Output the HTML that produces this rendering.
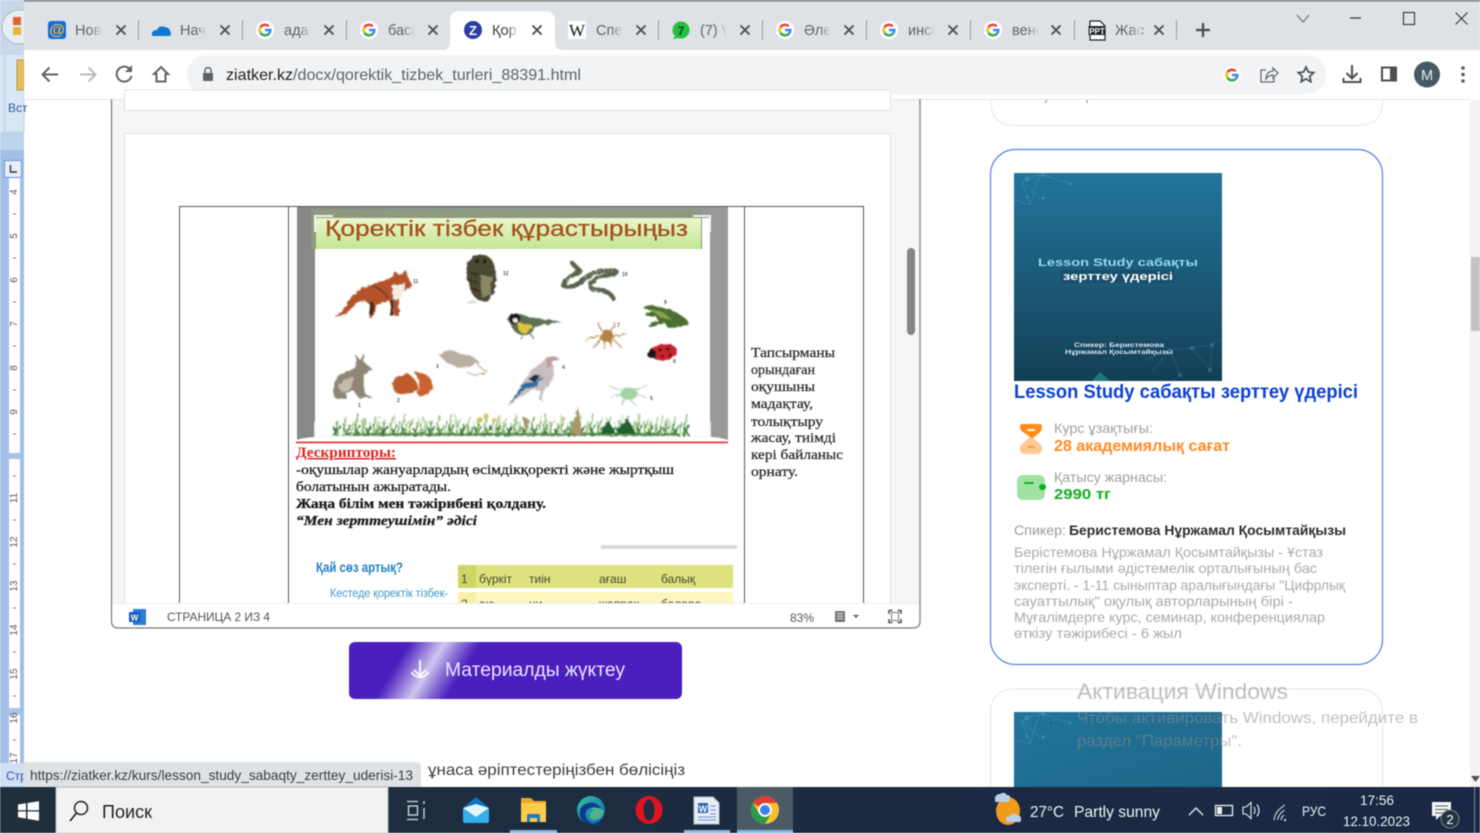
<!DOCTYPE html>
<html><head><meta charset="utf-8"><title>ziatker.kz</title>
<style>
html,body{margin:0;padding:0;width:1480px;height:833px;overflow:hidden;background:#fff}
svg{display:block;position:absolute;left:0;top:0;filter:blur(.4px)}
text{font-family:"Liberation Sans","Noto Sans CJK JP",sans-serif;white-space:pre}
.s{font-family:"Liberation Serif","Noto Serif CJK SC",serif}
.tab{font-size:14.5px;fill:#5f6368}
.x{stroke:#45484c;stroke-width:1.8;fill:none}
.sep{stroke:#9a9da1;stroke-width:1}
.g{fill:#a0a0a0;font-size:14px}
.d{fill:#aaa;font-size:14px}
.b{fill:#1c1c1c;font-size:14px;font-family:"Liberation Serif",serif;font-weight:bold;stroke:#222;stroke-width:.3}
.r{fill:#2a2a2a;font-size:14px;font-family:"Liberation Serif",serif;stroke:#2a2a2a;stroke-width:.25}
.w{fill:#eef0f2}
</style></head><body>
<svg width="1480" height="833" viewBox="0 0 1480 833" xmlns="http://www.w3.org/2000/svg">
<defs>
<linearGradient id="fade"><stop offset="0" stop-color="#dee1e6" stop-opacity="0"/><stop offset="1" stop-color="#dee1e6"/></linearGradient>
<linearGradient id="fadeW"><stop offset="0" stop-color="#fff" stop-opacity="0"/><stop offset="1" stop-color="#fff"/></linearGradient>
<linearGradient id="cover" x1="0" y1="0" x2="0" y2="1"><stop offset="0" stop-color="#23759c"/><stop offset=".55" stop-color="#1b5876"/><stop offset="1" stop-color="#143f56"/></linearGradient>
<linearGradient id="cover2" x1="0" y1="0" x2="1" y2="1"><stop offset="0" stop-color="#23759c"/><stop offset="1" stop-color="#1e6688"/></linearGradient>
<linearGradient id="shine" gradientUnits="userSpaceOnUse" x1="375" y1="699" x2="426.300" y2="730.500"><stop offset="0" stop-color="#4a1fbd"/><stop offset=".5" stop-color="#cfc6f0"/><stop offset=".74" stop-color="#8a6fd6"/><stop offset="1" stop-color="#4a1fbd"/></linearGradient>
<linearGradient id="tb"><stop offset="0" stop-color="#1f303c"/><stop offset="1" stop-color="#1a2845"/></linearGradient>
<linearGradient id="bar" x1="0" y1="0" x2="0" y2="1"><stop offset="0" stop-color="#eaf8cc"/><stop offset="1" stop-color="#c3e595"/></linearGradient>
<linearGradient id="edge" x1="0" y1="0" x2="1" y2="1"><stop offset="0" stop-color="#35c1a0"/><stop offset="1" stop-color="#0c63b8"/></linearGradient>
<linearGradient id="pan" x1="0" y1="0" x2="1" y2="0"><stop offset="0" stop-color="#888"/><stop offset="1" stop-color="#9a9a9a"/></linearGradient>
<filter id="bl" x="-5%" y="-5%" width="110%" height="110%"><feTurbulence type="fractalNoise" baseFrequency=".22" numOctaves="2" seed="4" result="n"/><feDisplacementMap in="SourceGraphic" in2="n" scale="3.500"/><feGaussianBlur stdDeviation=".55"/></filter>
<filter id="bl2" x="-10%" y="-300%" width="120%" height="700%"><feGaussianBlur stdDeviation="1"/></filter>
<pattern id="gr1" patternUnits="userSpaceOnUse" x="333" y="408" width="47" height="28">
<path d="M2 28L5 12M6 28L3 14M9 28L13 8M13 28L10 15M17 28L20 13M21 28L25 6M24 28L22 16M28 28L33 11M31 28L29 13M35 28L37 15M39 28L43 9M43 28L40 16M46 28L47 14" stroke="#6ea85a" stroke-width="1.100" fill="none"/>
<path d="M0 28L8 18M4 28L1 19M12 28L17 17M16 28L11 20M22 28L27 17M27 28L22 19M33 28L38 18M37 28L33 20M42 28L46 19" stroke="#2f6f35" stroke-width="1.500" fill="none"/>
</pattern>
<pattern id="gr2" patternUnits="userSpaceOnUse" x="351" y="408" width="61" height="28">
<path d="M4 28L7 8M8 28L14 13M15 28L12 10M24 28L28 7M30 28L26 14M38 28L42 11M46 28L43 6M52 28L57 12M57 28L54 16" stroke="#a3c77e" stroke-width=".9" fill="none"/>
<path d="M2 28H61M0 26H61" stroke="#3f7d3e" stroke-width="1.500"/>
</pattern>
<clipPath id="docClip"><rect x="112" y="99" width="808" height="504"/></clipPath>
<clipPath id="btnClip"><rect x="349" y="642" width="333" height="57" rx="6"/></clipPath>
<symbol id="gl" viewBox="-9 -9 18 18" overflow="visible">
<circle r="9" fill="#fff"/>
<path d="M-4.5-2.8A5.3 5.3 0 0 1 3.7-3.7" fill="none" stroke="#ea4335" stroke-width="2.5"/>
<path d="M-4.5-2.8A5.3 5.3 0 0 0-4.5 2.8" fill="none" stroke="#fbbc05" stroke-width="2.5"/>
<path d="M-4.5 2.8A5.3 5.3 0 0 0 3.8 3.7" fill="none" stroke="#34a853" stroke-width="2.5"/>
<path d="M3.8 3.7A5.3 5.3 0 0 0 5.3 0H0" fill="none" stroke="#4285f4" stroke-width="2.5"/>
</symbol>
<g id="net" stroke="#5fb0cc" stroke-width=".5" fill="#4aa0c0" opacity=".55">
<path d="M1022 181L1040 199M1022 181L1030 205M1040 174L1030 205M1040 174L1070 184M1040 174L1022 181M1014 200L1030 205" fill="none"/>
<circle cx="1027" cy="179" r="2"/><circle cx="1043" cy="175" r="1.6"/><circle cx="1051" cy="184" r="1.6" fill="#123"/><circle cx="1070" cy="184" r="1.2"/><circle cx="1027" cy="197" r="1.2"/><circle cx="1043" cy="198" r="1.4"/>
</g>
</defs>

<!-- Word window behind -->
<rect x="0" y="0" width="24" height="150" fill="#d5e4f4"/>
<rect x="0" y="0" width="24" height="55" fill="#c9d7e8"/>
<circle cx="19" cy="27" r="17" fill="#e9eef4" stroke="#aebdd0"/>
<rect x="13" y="17" width="8" height="8" fill="#d8662e"/><rect x="13" y="27" width="8" height="8" fill="#e9b43c"/>
<rect x="5" y="54" width="19" height="78" fill="#d9e7f5" stroke="#b8cfe6"/>
<rect x="17" y="60" width="7" height="30" fill="#e6bd5c" stroke="#b89440"/>
<text x="8" y="112" font-size="12" fill="#34589a">Вст</text>
<rect x="0" y="132" width="24" height="18" fill="#bdd3ec"/>
<rect x="0" y="150" width="24" height="620" fill="#a3bfe6"/>
<rect x="9" y="178" width="11" height="585" fill="#fff"/>
<rect x="9" y="453" width="11" height="6" fill="#a8c3e8"/><rect x="9" y="708" width="11" height="7" fill="#a8c3e8"/>
<rect x="4.5" y="160.5" width="17" height="17" fill="#e6eefa" stroke="#6d94d6"/>
<path d="M10.500 165V172H17" fill="none" stroke="#333" stroke-width="1.400"/>
<g font-size="10" fill="#555" text-anchor="middle">
<text transform="translate(17,192) rotate(-90)">4</text><text transform="translate(17,236) rotate(-90)">5</text><text transform="translate(17,280) rotate(-90)">6</text><text transform="translate(17,324) rotate(-90)">7</text><text transform="translate(17,368) rotate(-90)">8</text><text transform="translate(17,412) rotate(-90)">9</text><text transform="translate(17,498) rotate(-90)">11</text><text transform="translate(17,542) rotate(-90)">12</text><text transform="translate(17,586) rotate(-90)">13</text><text transform="translate(17,630) rotate(-90)">14</text><text transform="translate(17,674) rotate(-90)">15</text><text transform="translate(17,718) rotate(-90)">16</text><text transform="translate(17,758) rotate(-90)">17</text>
</g>
<path d="M13 214h3M13 258h3M13 302h3M13 346h3M13 390h3M13 434h3M13 476h3M13 520h3M13 564h3M13 608h3M13 652h3M13 696h3M13 740h3" stroke="#777" stroke-width="1"/>
<rect x="0" y="763" width="24" height="24" fill="#cfe0f4"/>
<text x="6" y="780" font-size="12" fill="#34589a">Стр</text>

<!-- Chrome top -->
<rect x="24" y="0" width="1456" height="50" fill="#dee1e6"/>
<rect x="24" y="0" width="1456" height="1.500" fill="#74787c"/>
<rect x="24" y="50" width="1456" height="49" fill="#fff"/>
<rect x="24" y="99" width="1446" height="1" fill="#e4e6e9"/>
<path d="M442 50Q450 50 450 42V21Q450 11 460 11H545Q555 11 555 21V42Q555 50 563 50Z" fill="#fff"/>
<path class="sep" d="M138.500 20V40M242.500 20V40M346.500 20V40M658.500 20V40M762.500 20V40M866.500 20V40M970.500 20V40M1074.500 20V40M1176.500 20V40"/>

<!-- Favicons -->
<rect x="48" y="21" width="18" height="18" rx="3" fill="#0b6de8"/>
<text x="57" y="35" font-size="16" font-weight="bold" fill="#ffb52e" text-anchor="middle">@</text>
<path d="M152 36Q151 30 157 30Q159 25 165 27Q170 28 170 31Q172 33 170 36Z" fill="#0f78d4"/>
<use href="#gl" x="256" y="21" width="18" height="18"/>
<use href="#gl" x="360" y="21" width="18" height="18"/>
<circle cx="473" cy="30" r="9" fill="#2c3da6"/><text x="473" y="35" font-size="13" font-weight="bold" fill="#fff" text-anchor="middle">Z</text>
<rect x="568" y="21" width="18" height="18" fill="#fff"/><text x="577" y="36" class="s" font-size="17" fill="#111" text-anchor="middle">W</text>
<circle cx="681" cy="30" r="8.500" fill="#25c03c"/><path d="M675 36l-2 3 5-1z" fill="#25c03c"/><text x="681" y="35" font-size="12" font-weight="bold" fill="#143" text-anchor="middle">7</text>
<use href="#gl" x="776" y="21" width="18" height="18"/>
<use href="#gl" x="880" y="21" width="18" height="18"/>
<use href="#gl" x="984" y="21" width="18" height="18"/>
<path d="M1090 21h10l5 5v14h-15z" fill="#fff" stroke="#222" stroke-width="1.200"/><rect x="1088.500" y="26" width="17" height="9" fill="#222"/><text x="1097" y="34" font-size="8" font-weight="bold" fill="#fff" text-anchor="middle">PPT</text>

<!-- Tab titles -->
<text class="tab" x="75" y="35">Нов</text><rect x="90" y="20" width="12" height="20" fill="url(#fade)"/>
<text class="tab" x="180" y="35">Нач</text><rect x="195" y="20" width="12" height="20" fill="url(#fade)"/>
<text class="tab" x="284" y="35">адап</text><rect x="299" y="20" width="12" height="20" fill="url(#fade)"/><rect x="310" y="20" width="12" height="20" fill="#dee1e6"/>
<text class="tab" x="388" y="35">басп</text><rect x="403" y="20" width="12" height="20" fill="url(#fade)"/><rect x="414" y="20" width="12" height="20" fill="#dee1e6"/>
<text class="tab" x="492" y="35" style="fill:#3c4043">Қор</text><rect x="507" y="20" width="12" height="20" fill="url(#fadeW)"/>
<text class="tab" x="596" y="35">Спец</text><rect x="611" y="20" width="12" height="20" fill="url(#fade)"/><rect x="622" y="20" width="12" height="20" fill="#dee1e6"/>
<text class="tab" x="700" y="35">(7) W</text><rect x="715" y="20" width="12" height="20" fill="url(#fade)"/><rect x="726" y="20" width="12" height="20" fill="#dee1e6"/>
<text class="tab" x="804" y="35">Әлеу</text><rect x="819" y="20" width="12" height="20" fill="url(#fade)"/><rect x="830" y="20" width="12" height="20" fill="#dee1e6"/>
<text class="tab" x="908" y="35">инсе</text><rect x="923" y="20" width="12" height="20" fill="url(#fade)"/><rect x="934" y="20" width="12" height="20" fill="#dee1e6"/>
<text class="tab" x="1012" y="35">вене</text><rect x="1027" y="20" width="12" height="20" fill="url(#fade)"/><rect x="1038" y="20" width="12" height="20" fill="#dee1e6"/>
<text class="tab" x="1115" y="35">Жас</text><rect x="1130" y="20" width="12" height="20" fill="url(#fade)"/>

<!-- Tab close -->
<path class="x" d="M116.500 25.500l9 9m0-9l-9 9M220.500 25.500l9 9m0-9l-9 9M324.500 25.500l9 9m0-9l-9 9M428.500 25.500l9 9m0-9l-9 9M532.500 25.500l9 9m0-9l-9 9M636.500 25.500l9 9m0-9l-9 9M740.500 25.500l9 9m0-9l-9 9M844.500 25.500l9 9m0-9l-9 9M948.500 25.500l9 9m0-9l-9 9M1051.500 25.500l9 9m0-9l-9 9M1154.500 25.500l9 9m0-9l-9 9"/>
<path d="M1203 23v14M1196 30h14" stroke="#45484c" stroke-width="2.200"/>

<!-- Window controls -->
<path d="M1297 15l6 7 6-7" fill="none" stroke="#6b6e72" stroke-width="1.100"/>
<path d="M1350 18h11" stroke="#333" stroke-width="1.200"/>
<rect x="1403.500" y="12.500" width="11" height="12" fill="none" stroke="#333" stroke-width="1.100"/>
<path d="M1455.500 12.500l12 12m0-12l-12 12" stroke="#333" stroke-width="1.100"/>

<!-- Toolbar -->
<path d="M58 74.500H43M49.500 67.500l-7 7 7 7" fill="none" stroke="#5f6368" stroke-width="2"/>
<path d="M95 74.500H80M88.500 67.500l7 7-7 7" fill="none" stroke="#b8babd" stroke-width="2"/>
<path d="M130.500 70A7.500 7.500 0 1 0 131.500 76" fill="none" stroke="#5f6368" stroke-width="2"/><path d="M132 65v7h-7z" fill="#5f6368"/>
<path d="M154 74l7-7 7 7h-2.500v7.500h-9V74z" fill="none" stroke="#5f6368" stroke-width="2"/>
<rect x="187" y="55" width="1139" height="39" rx="19.500" fill="#f1f3f4"/>
<rect x="203" y="73" width="10" height="8" rx="1" fill="#5f6368"/><path d="M205 73v-2.500a3 3 0 0 1 6 0V73" fill="none" stroke="#5f6368" stroke-width="1.500"/>
<text x="226" y="80" font-size="16" fill="#5f6368" textLength="355" lengthAdjust="spacingAndGlyphs"><tspan fill="#202124">ziatker.kz</tspan>/docx/qorektik_tizbek_turleri_88391.html</text>
<use href="#gl" x="1223" y="66" width="18" height="18"/>
<path d="M1266 70h-5v12h13v-4M1266 79c0-6 4-8 7-8v-3l5 5-5 5v-3c-3 0-5 1-7 4z" fill="none" stroke="#6a6d72" stroke-width="1.300"/>
<path d="M1306 67l2.300 5 5.400.6-4 3.700 1.100 5.400-4.800-2.800-4.800 2.800 1.100-5.400-4-3.700 5.400-.6z" fill="none" stroke="#4c4f53" stroke-width="1.700"/>
<path d="M1352 65v13M1346.500 73l5.500 5.500 5.500-5.500M1343.500 78v4h17v-4" fill="none" stroke="#4c4f53" stroke-width="2"/>
<rect x="1382" y="67.500" width="14" height="13" fill="#fff" stroke="#4c4f53" stroke-width="2"/><rect x="1390" y="67" width="6" height="14" fill="#4c4f53"/>
<circle cx="1427" cy="74.500" r="13" fill="#455a64"/><text x="1427" y="80" font-size="14.500" fill="#e8ecee" text-anchor="middle">M</text>
<circle cx="1463" cy="68" r="1.800" fill="#55585c"/><circle cx="1463" cy="74.500" r="1.800" fill="#55585c"/><circle cx="1463" cy="81" r="1.800" fill="#55585c"/>

<!-- Doc viewer -->
<rect x="112" y="100" width="808" height="528" fill="#f6f6f6"/>
<rect x="124.500" y="90" width="766" height="20.500" fill="#fff" stroke="#e2e2e2"/>
<rect x="124.500" y="133.500" width="766" height="490" fill="#fff" stroke="#e2e2e2"/>

<g clip-path="url(#docClip)">
<rect x="179.500" y="206.500" width="684" height="420" fill="#fff" stroke="#555"/>
<path d="M288.500 206v420M744.500 206v420" stroke="#555"/>

<!-- Picture -->
<rect x="297" y="207" width="431" height="233" fill="url(#pan)"/>
<rect x="315" y="218" width="395" height="220" fill="#fff"/>
<rect x="311" y="209" width="391" height="40" fill="#8d9a80"/>
<rect x="316" y="218" width="385" height="31" fill="url(#bar)"/>
<path d="M315 232v-16h18M693 216h17v16M315 422v15h18M693 437h17v-15" fill="none" stroke="#f2f2f2" stroke-width="2"/>
<text x="325" y="236" font-size="22" fill="#a5521c" stroke="#a5521c" stroke-width=".3" textLength="363" lengthAdjust="spacingAndGlyphs">Қоректік тізбек құрастырыңыз</text>

<g filter="url(#bl)">
<!-- fox -->
<path d="M335 316q8-3 12-12 8-15 24-19 12-4 22-8l2-6 4 4 7-5 2 8 4 7-9 7-4 4 0 20-5 0-1-15-12 2-5 2-4 13-3 0 1-13-6-5-8 4-6 7q-8 6-15 6z" fill="#b4522b"/>
<path d="M392 286l14-3-4 15-9 2z" fill="#f4eee6"/><path d="M335 316q6 0 12-3l-3 5z" fill="#f4eee6"/><path d="M372 302l-1 13M392 300l0 16" stroke="#3a2a20" stroke-width="3"/><path d="M372 286q12 4 17 13" stroke="#7d3a20" stroke-width="2" fill="none"/>
<!-- owl -->
<path d="M467 263q6-8 14-8 12 0 14 14 3 14-2 24-4 9-11 8-9-2-12-13-5-14-3-25z" fill="#4c4930"/>
<path d="M480 275l12 2-2 18-8 3z" fill="#8a8863"/><path d="M470 272l8 3M469 280l9 3M470 288l9 3" stroke="#2d2b1c" stroke-width="1.500"/><circle cx="477" cy="261" r="2" fill="#171510"/><circle cx="484" cy="261" r="2" fill="#171510"/><path d="M465 303q8-5 12-1-6 3-12 1z" fill="#ddd"/>
<!-- snake -->
<path d="M572 263l8 8-13 8q-8 7 0 8 10 0 18-9 12-9 30-7 6 2-6 4-14 2-18 8-3 6 6 7 12 0 17 9" fill="none" stroke="#58634b" stroke-width="4.500" stroke-linecap="round"/>
<path d="M575 276l-8 4M585 278q12-9 28-7M592 285q-2 5 6 6" fill="none" stroke="#a3a990" stroke-width="1.200" stroke-dasharray="2 2"/>
<!-- tit -->
<path d="M507 319q6-6 14-5l8 3 33 5-26 4q-4 9-13 9-9-1-12-10z" fill="#5d6f55"/>
<path d="M518 323q8 0 15 3-3 8-11 7-5-3-4-10z" fill="#dcc63c"/><circle cx="515" cy="319" r="5.500" fill="#14140f"/><circle cx="515" cy="320" r="2.300" fill="#eee"/>
<path d="M530 333l4 6M524 335l-3 4" stroke="#555"/>
<!-- spider -->
<g fill="none" stroke="#b98b52" stroke-width="1.200"><path d="M604 333q-8-9-4-11M610 333q6-9 4-11M600 336l-12 2-2 4M614 336l12-2M601 339l-8 9M613 339l8 8M606 340l-2 8M609 340l3 8"/></g>
<circle cx="607" cy="336" r="6.500" fill="#b3824a"/>
<!-- frog -->
<path d="M643 308q8-4 16-1 16 2 28 13l1 4-8 3-12 1-3-5-10 3-7 1 3-4 7-2-2-5-9 0-2-2 8-3z" fill="#4c7030"/><path d="M650 309l14 4 8 7-12-3z" fill="#8aa350"/>
<!-- ladybug -->
<ellipse cx="664" cy="352" rx="13" ry="8" fill="#c8242a" transform="rotate(-8 664 352)"/><circle cx="652" cy="354" r="4.500" fill="#191919"/><circle cx="660" cy="350" r="1.500" fill="#191919"/><circle cx="668" cy="349" r="1.500" fill="#191919"/><circle cx="670" cy="355" r="1.500" fill="#191919"/><circle cx="662" cy="356" r="1.500" fill="#191919"/>
<!-- hare -->
<path d="M335 398q-4-10 0-17 6-9 20-13l2-7-2-7 5 6 3-8 1 10 8 7-7 5-2 8 2 12 8 4-14 0-6-8-7 3 1 6z" fill="#8e8676"/><path d="M338 385q8-8 16-8l-3 12-9 4z" fill="#c2bcac"/>
<!-- squirrel -->
<path d="M392 384l4-7 5-1q6-5 10 0 8 6 7 14-6 4-14 4l-8-1-3-5z" fill="#bd5b29"/><path d="M414 372q14 0 18 10 2 10-9 14-8 1-4-7 2-8-5-17z" fill="#c7632e"/>
<!-- mouse -->
<path d="M439 355l12-5 10 4q12 1 18 8l-7 4-14 2-12-6z" fill="#b8afa3"/><path d="M477 364q8 8 9 6 1 5-10 5-6-1-9-3" fill="none" stroke="#b8a18c" stroke-width="1"/>
<!-- jay -->
<path d="M508 406l16-24q8-15 18-19l6-7 8 1 5 3-9 2 2 6q0 15-10 22l-2 11-3-2 1-9-10 0-14 10z" fill="#c9bdc0"/>
<path d="M508 406l14-21 14-4 8-5-8 11-10 1z" fill="#2f6d99"/><path d="M528 379l8-4 5 1-7 6z" fill="#15314e"/><path d="M546 358l9-2 4 3-6 2-6 8z" fill="#c49a93"/>
<!-- aphid -->
<ellipse cx="629" cy="394" rx="9" ry="6" fill="#a4d3a4"/><path d="M621 390l-12-4M620 395l-10 2M636 390l12-5M638 395l8 2M630 400l6 5M624 400l-2 5" stroke="#93bca0" stroke-width=".8"/>
</g>

<!-- grass -->
<g filter="url(#bl)">
<rect x="333" y="408" width="357" height="28" fill="url(#gr1)"/>
<rect x="345" y="408" width="335" height="28" fill="url(#gr2)"/>
<circle cx="480" cy="420" r="2.500" fill="#c8be4a"/><circle cx="486" cy="416" r="2.500" fill="#d2c64f"/><circle cx="494" cy="420" r="2" fill="#d2c64f"/>
<path d="M570 434l8-27 4 27zM526 434l-4-18 7 4z" fill="#a8966a"/><path d="M600 434l8-14 8 14zM615 434l12-16 9 16z" fill="#245f2e"/>
</g>
<g font-size="5" fill="#555" font-weight="bold">
<text x="413" y="283">11</text><text x="503" y="275">12</text><text x="622" y="276">10</text><text x="664" y="304">9</text><text x="617" y="327">7</text><text x="673" y="363">6</text><text x="650" y="400">5</text><text x="562" y="369">4</text><text x="436" y="368">3</text><text x="397" y="402">2</text><text x="358" y="407">1</text>
</g>
<path d="M296 440Q310 436 330 437H700Q716 436 728 440V441.500H296Z" fill="#fff"/>
<rect x="296" y="441.500" width="432" height="1.800" fill="#f0393c"/>

<!-- Descriptors -->
<text class="s" x="296" y="457" font-size="15" font-weight="bold" fill="#e02020" text-decoration="underline" textLength="100" lengthAdjust="spacingAndGlyphs">Дескрипторы:</text>
<text class="b" x="296" y="474" style="font-weight:normal" textLength="378" lengthAdjust="spacingAndGlyphs">-оқушылар жануарлардың өсімдікқоректі және жыртқыш</text>
<text class="b" x="296" y="491" style="font-weight:normal" textLength="155" lengthAdjust="spacingAndGlyphs">болатынын ажыратады.</text>
<text class="b" x="296" y="508" textLength="250" lengthAdjust="spacingAndGlyphs">Жаңа білім мен тәжірибені қолдану.</text>
<text class="b" x="296" y="525" font-style="italic" textLength="181" lengthAdjust="spacingAndGlyphs">“Мен зерттеушімін” әдісі</text>
<rect x="601" y="546" width="136" height="2" fill="#b5b5b5" filter="url(#bl2)"/>

<!-- Right cell -->
<text class="r" x="751" y="357" textLength="84" lengthAdjust="spacingAndGlyphs">Тапсырманы</text>
<text class="r" x="751" y="374" textLength="64" lengthAdjust="spacingAndGlyphs">орындаған</text>
<text class="r" x="751" y="391" textLength="64" lengthAdjust="spacingAndGlyphs">оқушыны</text>
<text class="r" x="751" y="408" textLength="62" lengthAdjust="spacingAndGlyphs">мадақтау,</text>
<text class="r" x="751" y="426" textLength="72" lengthAdjust="spacingAndGlyphs">толықтыру</text>
<text class="r" x="751" y="442" textLength="85" lengthAdjust="spacingAndGlyphs">жасау, тиімді</text>
<text class="r" x="751" y="459" textLength="92" lengthAdjust="spacingAndGlyphs">кері байланыс</text>
<text class="r" x="751" y="476" textLength="47" lengthAdjust="spacingAndGlyphs">орнату.</text>

<!-- Textbook table -->
<text x="316" y="572" font-size="14" font-weight="bold" fill="#1c80bf" textLength="87" lengthAdjust="spacingAndGlyphs">Қай сөз артық?</text>
<text x="330" y="597" font-size="12" fill="#3c96c9" textLength="118" lengthAdjust="spacingAndGlyphs">Кестеде қоректік тізбек-</text>
<rect x="458" y="565" width="275" height="23" fill="#dde27d"/><rect x="458" y="565" width="18" height="23" fill="#cdd563"/>
<rect x="458" y="592" width="275" height="14" fill="#fdf6bf"/><rect x="458" y="592" width="18" height="14" fill="#f7eeaa"/>
<g font-size="12" fill="#4a4a35">
<text x="461" y="583">1</text><text x="479" y="583">бүркіт</text><text x="529" y="583">тиін</text><text x="599" y="583">ағаш</text><text x="661" y="583">балық</text>
<text x="461" y="608">2</text><text x="479" y="608">аю</text><text x="529" y="608">ни</text><text x="599" y="608">жапрақ</text><text x="661" y="608">балара</text>
</g>
</g>

<!-- Viewer scrollbar -->
<rect x="907" y="248" width="8" height="87" rx="4" fill="#858585"/>

<!-- Viewer status bar -->
<rect x="112" y="603" width="808" height="25" fill="#fff"/>
<path d="M112 603.500H920" stroke="#ececec"/>
<path d="M111.500 99V621q0 7 7 7H913q7 0 7-7V99" fill="none" stroke="#777" stroke-width="1.200"/>
<rect x="133" y="609" width="13" height="16" fill="#2b7cd3"/><rect x="129" y="612" width="11" height="10" fill="#185abd"/><text x="134.500" y="620.500" font-size="8" font-weight="bold" fill="#fff" text-anchor="middle">W</text>
<text x="167" y="621" font-size="12" fill="#555" textLength="103" lengthAdjust="spacingAndGlyphs">СТРАНИЦА 2 ИЗ 4</text>
<text x="790" y="622" font-size="12" fill="#555" textLength="24" lengthAdjust="spacingAndGlyphs">83%</text>
<rect x="835" y="611" width="10" height="11" fill="#777"/><path d="M837 613.500h6M837 616h6M837 618.500h6" stroke="#ddd"/><path d="M853 615h6l-3 3z" fill="#555"/>
<path d="M889 614v-3.500h3.500M901 614v-3.500h-3.500M889 619v3.500h3.500M901 619v3.500h-3.500" fill="none" stroke="#555" stroke-width="1.600"/><rect x="891.500" y="612.500" width="7" height="8" fill="none" stroke="#777"/>

<!-- Download button -->
<rect x="349" y="642" width="333" height="57" rx="6" fill="url(#shine)"/>
<path d="M420 660v15M414 670l6 6 6-6M411.500 672a9.500 9.500 0 0 0 17 0" fill="none" stroke="#fff" stroke-width="2" opacity=".9"/>
<text x="445" y="676" font-size="19" fill="#ebe7ff" textLength="180" lengthAdjust="spacingAndGlyphs">Материалды жүктеу</text>

<!-- Share line and tooltip -->
<text x="428" y="775" font-size="16" fill="#3d3d3d" textLength="257" lengthAdjust="spacingAndGlyphs">ұнаса әріптестеріңізбен бөлісіңіз</text>
<path d="M24 762H416Q421 762 421 767V787H24Z" fill="#dee1e6"/>
<text x="30" y="780" font-size="14" fill="#3c4043" textLength="383" lengthAdjust="spacingAndGlyphs">https://ziatker.kz/kurs/lesson_study_sabaqty_zerttey_uderisi-13</text>

<!-- Right cards -->
<path d="M990.500 100.500q0 25 25 25H1357.500q25 0 25-25V100" fill="none" stroke="#dfe7f4"/>
<path d="M1047 100l-2 3M1087 100v3" stroke="#888" stroke-width="1"/>
<rect x="990.500" y="149.500" width="392" height="515" rx="25" fill="#fff" stroke="#4f83e2" stroke-width="1.200"/>
<rect x="1014" y="173" width="208" height="208" fill="url(#cover)"/>
<use href="#net"/>
<g stroke="#4aa0c0" stroke-width=".5" fill="#3d93b3" opacity=".5"><path d="M1145 360L1170 350 1192 348 1212 345 1222 338M1170 350L1180 375M1192 348L1210 370M1212 345L1210 370M1152 372L1170 350" fill="none"/><circle cx="1170" cy="350" r="1.800"/><circle cx="1192" cy="348" r="1.800"/><circle cx="1212" cy="345" r="1.800"/><circle cx="1180" cy="375" r="1.800"/><circle cx="1210" cy="370" r="1.800"/></g>
<path d="M1092 381l8-9 10 9z" fill="#2f9c90" opacity=".6"/>
<text x="1038" y="266" font-size="11" font-weight="bold" fill="#8fdcf0" textLength="160" lengthAdjust="spacingAndGlyphs">Lesson Study сабақты</text>
<rect x="1061" y="270" width="114" height="13" fill="#1a4e6a"/>
<text x="1063" y="280" font-size="11" font-weight="bold" fill="#fff" textLength="110" lengthAdjust="spacingAndGlyphs">зерттеу үдерісі</text>
<text x="1074" y="347" font-size="6" font-weight="bold" fill="#d5e6ef" textLength="90" lengthAdjust="spacingAndGlyphs">Спикер: Беристемова</text>
<text x="1065" y="354" font-size="6" font-weight="bold" fill="#d5e6ef" textLength="108" lengthAdjust="spacingAndGlyphs">Нұржамал Қосымтайқызы</text>
<text x="1014" y="398" font-size="19" font-weight="bold" fill="#0b40d2" textLength="344" lengthAdjust="spacingAndGlyphs">Lesson Study сабақты зерттеу үдерісі</text>

<!-- hourglass -->
<path d="M1022 424h18q2 0 2 3 0 4-4 7l-5 4-2 0-5-4q-6-3-6-7 0-3 2-3z" fill="#ff8c17"/>
<path d="M1029 438h4l7 6q3 3 2 6-1 4-5 4h-12q-4 0-5-4-1-3 2-6z" fill="#ffc995"/>
<rect x="1027" y="429" width="8" height="2" rx="1" fill="#fff"/><rect x="1027" y="446" width="8" height="2" rx="1" fill="#ff9a3a"/>
<!-- wallet -->
<rect x="1017" y="475" width="28" height="25" rx="6" fill="#9fe3a4"/>
<rect x="1024" y="482" width="10" height="2" rx="1" fill="#07b31f"/>
<rect x="1039" y="484" width="7" height="6" rx="3" fill="#07b31f"/>

<text class="g" x="1054" y="433" textLength="99" lengthAdjust="spacingAndGlyphs">Курс ұзақтығы:</text>
<text x="1054" y="451" font-size="15.500" font-weight="bold" fill="#ff8a24" textLength="176" lengthAdjust="spacingAndGlyphs">28 академиялық сағат</text>
<text class="g" x="1054" y="482" textLength="113" lengthAdjust="spacingAndGlyphs">Қатысу жарнасы:</text>
<text x="1054" y="499" font-size="15" font-weight="bold" fill="#0fae1e" textLength="57" lengthAdjust="spacingAndGlyphs">2990 тг</text>
<text x="1014" y="535" font-size="14" fill="#9a9a9a" textLength="52" lengthAdjust="spacingAndGlyphs">Спикер:</text>
<text x="1069" y="535" font-size="14" font-weight="bold" fill="#2e2e2e" textLength="277" lengthAdjust="spacingAndGlyphs">Беристемова Нұржамал Қосымтайқызы</text>
<text class="d" x="1014" y="557" textLength="309" lengthAdjust="spacingAndGlyphs">Берістемова Нұржамал Қосымтайқызы - Ұстаз</text>
<text class="d" x="1014" y="573" textLength="303" lengthAdjust="spacingAndGlyphs">тілегін ғылыми әдістемелік орталығының бас</text>
<text class="d" x="1014" y="590" textLength="331" lengthAdjust="spacingAndGlyphs">эксперті. - 1-11 сыныптар аралығындағы "Цифрлық</text>
<text class="d" x="1014" y="606" textLength="279" lengthAdjust="spacingAndGlyphs">сауаттылық" оқулық авторларының бірі -</text>
<text class="d" x="1014" y="622" textLength="311" lengthAdjust="spacingAndGlyphs">Мұғалімдерге курс, семинар, конференциялар</text>
<text class="d" x="1014" y="638" textLength="168" lengthAdjust="spacingAndGlyphs">өткізу тәжірибесі - 6 жыл</text>

<!-- Lower card -->
<path d="M990.500 787V714q0-25 25-25H1357.500q25 0 25 25V787" fill="none" stroke="#dfe7f4"/>
<rect x="1014" y="712" width="208" height="75" fill="url(#cover2)"/>
<g transform="translate(0,539)"><use href="#net"/></g>

<!-- Page scrollbar -->
<rect x="1470" y="100" width="10" height="687" fill="#f3f3f3"/>
<rect x="1471" y="257" width="9" height="74" fill="#c2c2c2"/>
<path d="M1471 776h9l-4.500 6z" fill="#505050"/>

<!-- Windows watermark -->
<text x="1077" y="699" font-size="22" fill="#8a8a8a" fill-opacity=".55" textLength="211" lengthAdjust="spacingAndGlyphs">Активация Windows</text>
<text x="1077" y="723" font-size="16" fill="#8a8a8a" fill-opacity=".55" textLength="341" lengthAdjust="spacingAndGlyphs">Чтобы активировать Windows, перейдите в</text>
<text x="1077" y="746" font-size="16" fill="#8a8a8a" fill-opacity=".55" textLength="165" lengthAdjust="spacingAndGlyphs">раздел "Параметры".</text>

<!-- Taskbar -->
<rect x="0" y="787" width="1480" height="46" fill="url(#tb)"/>
<path d="M18 804.500l8-1.200v7H18zM27.500 803l11.500-1.800v9.100H27.500zM18 811.500h8v7l-8-1.200zM27.500 811.500H39v9.200l-11.500-1.800z" fill="#fff"/>
<rect x="56" y="787" width="332" height="46" fill="#f2f2f2" stroke="#b8b8b8"/>
<circle cx="81" cy="808" r="6.500" fill="none" stroke="#222" stroke-width="1.500"/><path d="M76.500 813l-6.500 8" stroke="#222" stroke-width="1.600"/>
<text x="102" y="818" font-size="18" fill="#222" textLength="50" lengthAdjust="spacingAndGlyphs">Поиск</text>
<path d="M407 801.500h11M407 819.500h11M424 801v3M424 808v11" stroke="#d9dee2" stroke-width="1.300"/><rect x="408.500" y="806" width="9" height="9" fill="none" stroke="#d9dee2" stroke-width="1.300"/>
<!-- mail -->
<path d="M476 797l13 11v13a2 2 0 0 1-2 2h-22a2 2 0 0 1-2-2v-13z" fill="#0f73c8"/><path d="M463 808l13 9 13-9v13a2 2 0 0 1-2 2h-22a2 2 0 0 1-2-2z" fill="#35aeee"/><path d="M463 808l13 9 13-9-13-4z" fill="#e5f5fc"/>
<!-- folder -->
<path d="M521 798h10l3 3h12v5h-25z" fill="#e8a92a"/><rect x="521" y="803" width="25" height="19" fill="#ffcb4a"/><path d="M527 822v-6q0-2 2-2h9q2 0 2 2v6h-3v-4h-7v4z" fill="#1d7cc4"/>
<rect x="510" y="830" width="47" height="3" fill="#8fb8de"/>
<!-- edge -->
<circle cx="591" cy="810" r="14" fill="url(#edge)"/><path d="M580 816q-2-10 8-13 9-2 13 6-6-3-11-1-6 3-4 9 2 6 9 7 4 0 8-2-4 5-11 3-10-2-12-9z" fill="#0e3a8c"/><path d="M592 808q8-1 12 3-1 8-9 9-6 0-5-5 0-4 4-4" fill="#7adf6d" opacity=".55"/>
<!-- opera -->
<ellipse cx="649" cy="810" rx="13.500" ry="14" fill="#e0131f"/><ellipse cx="649" cy="810" rx="5.500" ry="10.500" fill="#1f2d40"/>
<!-- word -->
<path d="M694 797h19l6 6v21h-25z" fill="#e7eef8" stroke="#b4c3d6"/><path d="M698 803h10v10h-10z" fill="#2a62b8"/><text x="703" y="812" font-size="9" font-weight="bold" fill="#fff" text-anchor="middle">W</text><path d="M710 806h6M710 810h6M710 814h6M698 817h18M698 820h18" stroke="#6e92c7"/>
<rect x="684" y="830" width="46" height="3" fill="#8fb8de"/>
<!-- chrome -->
<rect x="737" y="787" width="56" height="46" fill="#4a5b65"/>
<rect x="737" y="830" width="56" height="3" fill="#84b8e6"/>
<circle cx="765" cy="810" r="14" fill="#fbc02d"/>
<path d="M752.900 803A14 14 0 0 1 777.100 803H765A7 7 0 0 0 758.900 806.500z" fill="#dc3f35"/>
<path d="M752.900 803A14 14 0 0 0 765 824L771 813.500A7 7 0 0 1 759 813.500z" fill="#2b9b49"/>
<circle cx="765" cy="810" r="6.800" fill="#fff"/><circle cx="765" cy="810" r="5" fill="#3f7fe8"/>

<!-- Tray -->
<ellipse cx="1008" cy="811" rx="12" ry="14" fill="#f19b1c"/><path d="M995 799q0-5 5-5 4-3 7 1 4 0 3 4t-4 3h-9q-3 0-2-3z" fill="#b9cfe8"/><path d="M1006 820q0-4 4-4 3-4 7-1 4 0 4 4t-3 3h-10q-2 0-2-2z" fill="#b9cfe8"/>
<text x="1030" y="817" font-size="16" fill="#f0f2f4" textLength="34" lengthAdjust="spacingAndGlyphs">27°C</text>
<text x="1074" y="817" font-size="16" fill="#f0f2f4" textLength="86" lengthAdjust="spacingAndGlyphs">Partly sunny</text>
<path d="M1189 815l7-7 7 7" fill="none" stroke="#eef0f2" stroke-width="1.300"/>
<rect x="1215.500" y="805.500" width="17" height="10" fill="none" stroke="#eef0f2" stroke-width="1.300"/><rect x="1217" y="807" width="5" height="7" fill="#eef0f2"/>
<path d="M1243 807h3l5-4.500v16l-5-4.500h-3zM1254 807q2 3.500 0 7M1257 804.500q4 6 0 12" fill="none" stroke="#eef0f2" stroke-width="1.100"/>
<path d="M1274 820q1-9 11-15M1277.500 820q1-6 7-10M1281 820q.5-3 3-5" fill="none" stroke="#c4ccd2" stroke-width="1.200"/><circle cx="1285" cy="820" r="1" fill="#fff"/>
<text x="1302" y="816" font-size="14" class="w" textLength="24" lengthAdjust="spacingAndGlyphs">РУС</text>
<text x="1360" y="805" font-size="14" class="w" textLength="34" lengthAdjust="spacingAndGlyphs">17:56</text>
<text x="1343" y="826" font-size="14" class="w" textLength="67" lengthAdjust="spacingAndGlyphs">12.10.2023</text>
<path d="M1432 802h19v14h-11l-4 4v-4h-4z" fill="#f5f6f7"/><path d="M1435 806h13M1435 809.500h13M1435 813h9" stroke="#56606a"/>
<circle cx="1450" cy="819" r="9" fill="#263341" stroke="#7d8790"/><text x="1450" y="824" font-size="13" fill="#fff" text-anchor="middle">2</text>
<rect x="1474" y="787" width="1" height="46" fill="#7d8a96"/>
</svg>
</body></html>
